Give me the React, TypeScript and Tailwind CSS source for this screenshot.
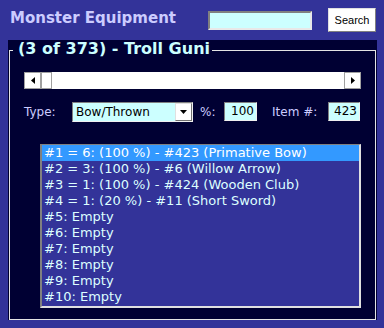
import React from "react";

const rows = [
  "#1 = 6: (100 %) - #423 (Primative Bow)",
  "#2 = 3: (100 %) - #6 (Willow Arrow)",
  "#3 = 1: (100 %) - #424 (Wooden Club)",
  "#4 = 1: (20 %) - #11 (Short Sword)",
  "#5: Empty",
  "#6: Empty",
  "#7: Empty",
  "#8: Empty",
  "#9: Empty",
  "#10: Empty",
];

function Arrow({ dir }: { dir: "left" | "right" | "down" }) {
  if (dir === "down") {
    return (
      <svg width="7" height="4" viewBox="0 0 7 4">
        <path d="M0 0h7L3.5 4z" fill="#000" />
      </svg>
    );
  }
  return (
    <svg width="4" height="7" viewBox="0 0 4 7">
      {dir === "left" ? <path d="M4 0v7L0 3.5z" fill="#000" /> : <path d="M0 0v7l4-3.5z" fill="#000" />}
    </svg>
  );
}

function ScrollBar() {
  return (
    <div className="flex h-[17px] bg-white">
      <div className="flex w-[17px] items-center justify-center border border-[#a0a0a0] bg-white">
        <Arrow dir="left" />
      </div>
      <div className="w-[11px] border border-[#a0a0a0] bg-white" />
      <div className="flex-1" />
      <div className="flex w-[17px] items-center justify-center border border-[#a0a0a0] bg-white">
        <Arrow dir="right" />
      </div>
    </div>
  );
}

export default function App() {
  return (
    <div className="h-[328px] w-[384px] overflow-hidden bg-[#333399] font-['DejaVu_Sans',Verdana,sans-serif]">
      <div className="flex h-10 items-start">
        <div className="ml-[10px] mt-[10px] text-[15px] font-bold leading-[17px] text-[#ccccff]">
          Monster Equipment
        </div>
        <input
          className="ml-auto mt-[11px] h-[19px] w-[104px] border-2 border-t-[#808080] border-l-[#808080] border-r-[#e8e8e8] border-b-[#e8e8e8] bg-[#ccffff] outline-none"
          defaultValue=""
        />
        <button className="ml-[16px] mr-[8px] mt-[8px] flex h-[24px] w-[48px] items-center justify-center border border-t-[#e0e0e0] border-l-[#e0e0e0] border-r-[#808080] border-b-[#808080] bg-white font-['Liberation_Sans',Arial,sans-serif] text-[11px] text-black">
          Search
        </button>
      </div>

      <div className="ml-[8px] h-[280px] w-[369px] bg-[#000033] pl-[1px] pr-[1px]">
        <fieldset className="h-[280px] border border-[#e4e4e4] px-[14px]">
          <legend className="ml-[-11px] pb-[3px] pl-[5px] pr-[2px] pt-[1px] text-[16px] font-bold leading-[16px] text-[#ccffff]">
            (3 of 373) - Troll Guni
          </legend>
          <div className="mt-[12px]">
            <ScrollBar />
          </div>

          <div className="mt-[12px] flex h-[21px] items-center text-[12px] text-[#ccccff]">
            <span className="w-[48px]">Type:</span>
            <div className="flex h-[20px] w-[121px] items-stretch border border-t-[#808080] border-l-[#808080] border-r-[#f0f0f0] border-b-[#f0f0f0] bg-[#ccffff] text-black">
              <span className="flex-1 pl-[3px] leading-[18px]">Bow/Thrown</span>
              <span className="flex w-[17px] items-center justify-center border border-t-[#e0e0e0] border-l-[#e0e0e0] border-r-[#707070] border-b-[#707070] bg-white">
                <Arrow dir="down" />
              </span>
            </div>
            <span className="ml-[7px] w-[24px]">%:</span>
            <div className="h-[19px] w-[33px] border border-t-[#808080] border-l-[#808080] border-r-[#f0f0f0] border-b-[#f0f0f0] bg-[#ccffff] pr-[2px] text-right leading-[17px] text-black">
              100
            </div>
            <span className="ml-[15px] w-[56px]">Item #:</span>
            <div className="h-[19px] w-[32px] border border-t-[#808080] border-l-[#808080] border-r-[#f0f0f0] border-b-[#f0f0f0] bg-[#ccffff] pr-[2px] text-right leading-[17px] text-black">
              423
            </div>
          </div>

          <div className="ml-[16px] mt-[22px] w-[321px] border-t border-l-2 border-r-2 border-b-2 border-t-[#808080] border-l-[#808080] border-r-[#e0e0e0] border-b-[#e0e0e0] bg-[#333399] pb-[1px] text-[13px] leading-[16px]">
            {rows.map((row, index) => (
              <div
                key={index}
                className={index === 0 ? "h-4 bg-[#3399ff] pl-[2px] text-white" : "h-4 pl-[2px] text-[#ddffff]"}
              >
                {row}
              </div>
            ))}
          </div>
        </fieldset>
      </div>
    </div>
  );
}
